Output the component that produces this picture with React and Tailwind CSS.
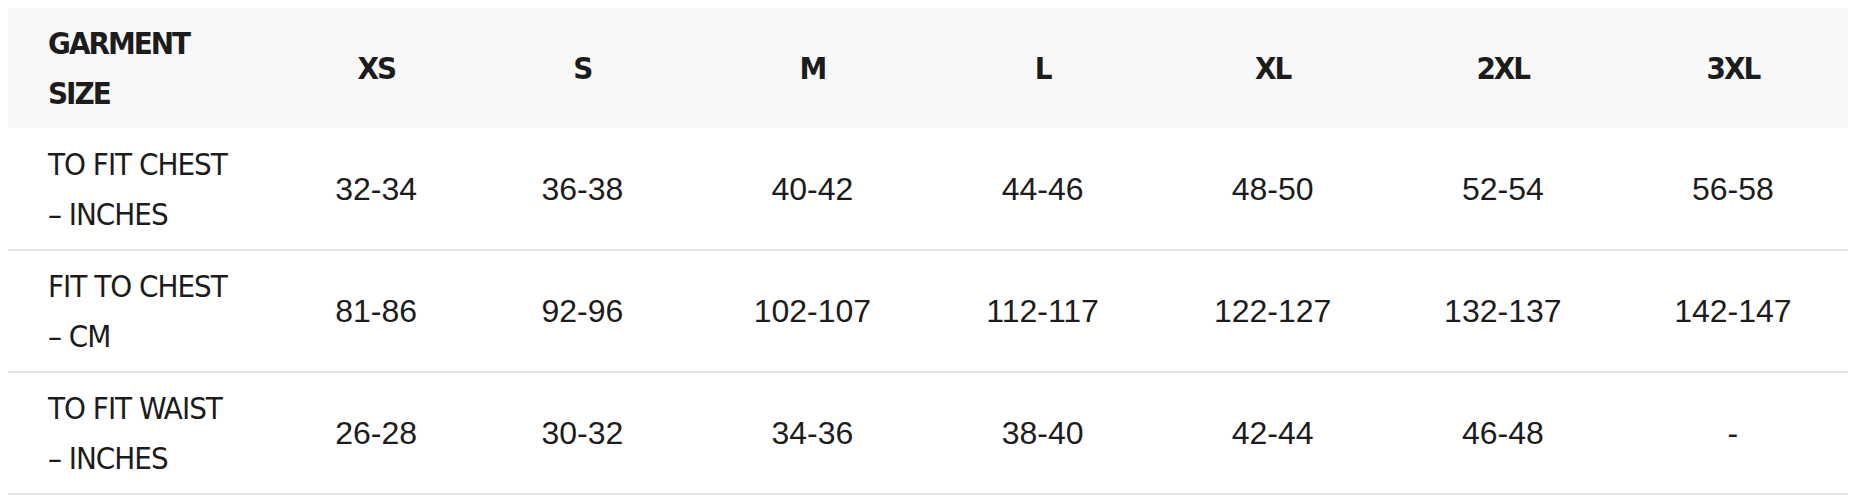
export default function App() {
  const sizes = ['XS', 'S', 'M', 'L', 'XL', '2XL', '3XL'];
  const rows = [
    { label: ['TO FIT CHEST', '– INCHES'], values: ['32-34', '36-38', '40-42', '44-46', '48-50', '52-54', '56-58'] },
    { label: ['FIT TO CHEST', '– CM'], values: ['81-86', '92-96', '102-107', '112-117', '122-127', '132-137', '142-147'] },
    { label: ['TO FIT WAIST', '– INCHES'], values: ['26-28', '30-32', '34-36', '38-40', '42-44', '46-48', '-'] },
  ];

  return (
    <div className="p-2 bg-white min-h-screen">
      <table
        className="w-[1840px] table-fixed border-collapse text-[#1c1c1c] text-[31px] leading-[50px]"
        style={{ fontFamily: '"Liberation Sans Narrow", "DejaVu Sans Condensed", "Liberation Sans", sans-serif' }}
      >
        <colgroup>
          <col className="w-[277px]" />
          <col className="w-[182px]" />
          {sizes.slice(1).map((s) => (
            <col key={s} className="w-[230px]" />
          ))}
        </colgroup>
        <thead>
          {/* Header */}
          <tr className="bg-[#f8f8f8] h-[120px]">
            <th className="text-left font-bold tracking-[-2px] pl-10 py-[10px] align-middle">
              GARMENT
              <br />
              SIZE
            </th>
            {sizes.map((s) => (
              <th key={s} className="text-center font-bold tracking-[-2px] align-middle">
                {s}
              </th>
            ))}
          </tr>
        </thead>
        <tbody>
          {rows.map((row) => (
            <tr key={row.label[0]} className="h-[122px] border-b-2 border-[#e6e6e6]">
              <td className="text-left tracking-[-1px] pl-10 py-[10px] align-middle">
                {row.label[0]}
                <br />
                {row.label[1]}
              </td>
              {row.values.map((v, i) => (
                <td
                  key={i}
                  className="text-center text-[32px] align-middle"
                  style={{ fontFamily: '"Liberation Sans", Arial, sans-serif' }}
                >
                  {v}
                </td>
              ))}
            </tr>
          ))}
        </tbody>
      </table>
    </div>
  );
}
